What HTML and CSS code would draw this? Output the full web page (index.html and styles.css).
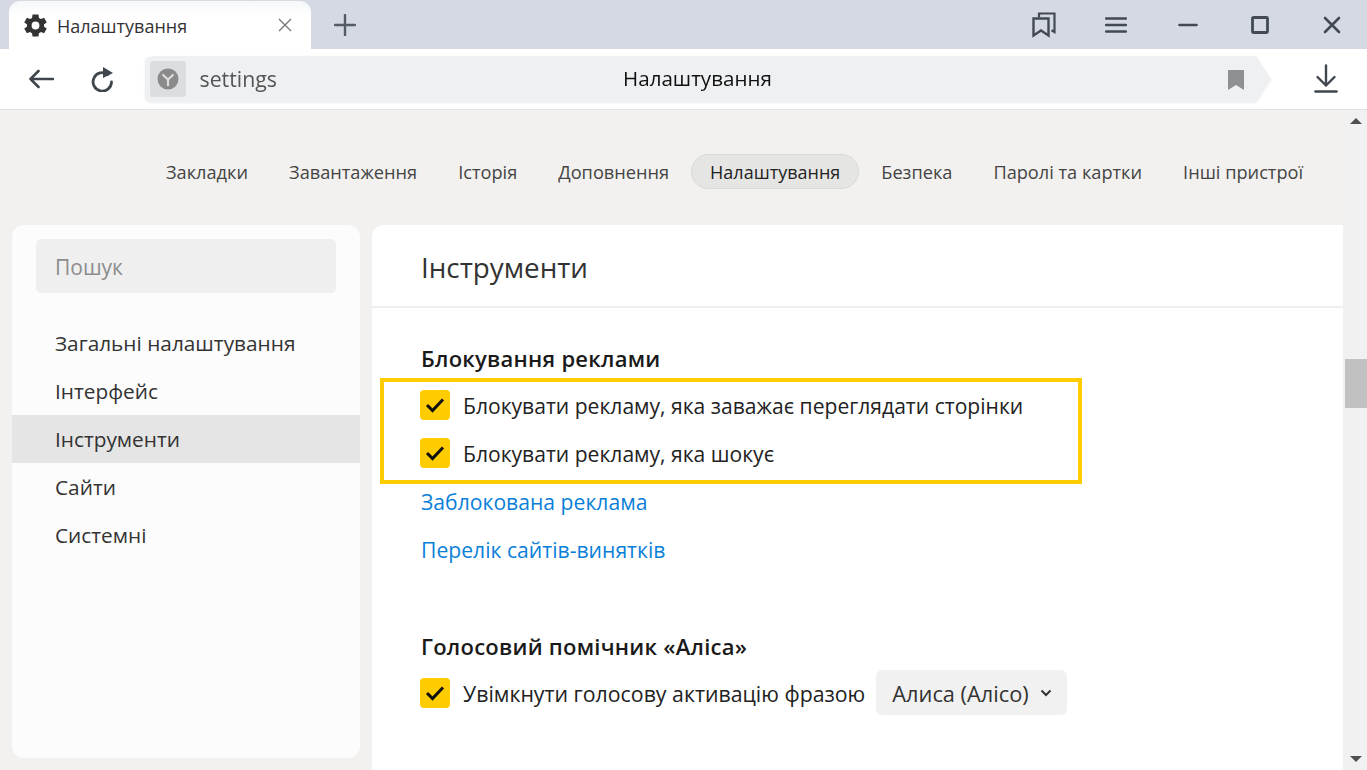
FILE: index.html
```html
<!DOCTYPE html>
<html lang="uk">
<head>
<meta charset="utf-8">
<title>Налаштування</title>
<link rel="stylesheet" href="styles.css">
</head>
<body>
<div class="app">
  <header class="tabbar">
    <div class="tab">
      <svg class="tab-gear" width="23" height="23" viewBox="2 2 20 20"><path fill="#333" d="M19.400 13a7.600 7.600 0 0 0 0-2l2.400-1.700-2.300-4-2.700 1.100a7.600 7.600 0 0 0-1.800-1L14.600 2.500H9.400L9 5.400a7.600 7.600 0 0 0-1.800 1L4.500 5.300l-2.300 4L4.600 11a7.600 7.600 0 0 0 0 2l-2.400 1.700 2.300 4 2.700-1.100a7.600 7.600 0 0 0 1.800 1l.4 2.900h5.200l.4-2.900a7.600 7.600 0 0 0 1.800-1l2.700 1.100 2.300-4zM12 15.400a3.400 3.400 0 1 1 0-6.800 3.400 3.400 0 0 1 0 6.800z"/></svg>
      <span class="tab-title">Налаштування</span>
      <svg class="tab-close" width="14" height="14" viewBox="0 0 14 14"><path d="M1 1l12 12M13 1L1 13" stroke="#777" stroke-width="1.400" fill="none"/></svg>
    </div>
    <svg class="tab-new" width="22" height="22" viewBox="0 0 22 22"><path d="M11 1v20M1 11h20" stroke="#555b62" stroke-width="2.400" fill="none" stroke-linecap="round"/></svg>
    <div class="win-controls">
      <span class="win-slot"><svg width="24" height="26" viewBox="0 0 24 26"><path d="M7 5.500V1.500h15.500v18.500l-3-1.800" stroke="#434a52" stroke-width="2.200" fill="none"/><path d="M1.500 6.500h15v17l-7.500-5-7.500 5z" stroke="#434a52" stroke-width="2.400" fill="none"/></svg></span>
      <span class="win-slot"><svg width="22" height="18" viewBox="0 0 22 18"><path d="M1 2.500h20M1 9h20M1 15.500h20" stroke="#434a52" stroke-width="2.400" stroke-linecap="round" fill="none"/></svg></span>
      <span class="win-slot"><svg width="20" height="4" viewBox="0 0 20 4"><path d="M1.500 2h17" stroke="#434a52" stroke-width="2.600" stroke-linecap="round"/></svg></span>
      <span class="win-slot"><svg width="20" height="20" viewBox="0 0 20 20"><rect x="2.500" y="2.500" width="15" height="15" rx="1" stroke="#434a52" stroke-width="2.800" fill="none"/></svg></span>
      <span class="win-slot"><svg width="18" height="18" viewBox="0 0 18 18"><path d="M2 2l14 14M16 2L2 16" stroke="#434a52" stroke-width="2.600" stroke-linecap="round" fill="none"/></svg></span>
    </div>
  </header>

  <div class="toolbar">
    <svg class="nav-back" width="26" height="20" viewBox="0 0 26 20"><path d="M25 10H2.500M10.500 2L2.500 10l8 8" stroke="#3f464d" stroke-width="2.600" fill="none" stroke-linecap="round" stroke-linejoin="round"/></svg>
    <svg class="nav-reload" width="24" height="26" viewBox="0 0 24 26"><path d="M17.800 8.500A9.200 9.200 0 1 0 21.500 16" stroke="#3f464d" stroke-width="2.800" fill="none" stroke-linecap="round"/><path d="M13 1l10 6-10 5z" fill="#3f464d"/></svg>
    <div class="omnibox-wrap">
      <div class="omnibox">
        <div class="site-badge">
          <svg width="22" height="22" viewBox="0 0 22 22"><circle cx="11" cy="11" r="10.500" fill="#8a8a8a"/><path d="M5.500 6.500L11 11.500l5.500-5M11 11.500V18" stroke="#dcdddf" stroke-width="2.200" fill="none"/></svg>
        </div>
        <span class="omni-url">settings</span>
        <span class="omni-title">Налаштування</span>
        <svg class="omni-mark" width="16" height="20" viewBox="0 0 16 20"><path d="M0 0h16v20l-8-5-8 5z" fill="#8f9092"/></svg>
      </div>
    </div>
    <svg class="download" width="24" height="30" viewBox="0 0 24 30"><path d="M12 1.500v20M3.500 13l8.500 8.500 8.500-8.500" stroke="#3f464d" stroke-width="2.400" fill="none" stroke-linecap="round" stroke-linejoin="round"/><path d="M1.500 27.500h21" stroke="#3f464d" stroke-width="2.600" stroke-linecap="round"/></svg>
  </div>

  <div class="viewport">
    <div class="page">
      <nav class="topnav">
        <a class="topnav-item">Закладки</a>
        <a class="topnav-item">Завантаження</a>
        <a class="topnav-item">Історія</a>
        <a class="topnav-item">Доповнення</a>
        <a class="topnav-item active">Налаштування</a>
        <a class="topnav-item">Безпека</a>
        <a class="topnav-item">Паролі та картки</a>
        <a class="topnav-item">Інші пристрої</a>
      </nav>
      <div class="columns">
        <aside class="sidebar">
          <div class="search">Пошук</div>
          <ul class="side-list">
            <li class="side-item">Загальні налаштування</li>
            <li class="side-item">Інтерфейс</li>
            <li class="side-item current">Інструменти</li>
            <li class="side-item">Сайти</li>
            <li class="side-item">Системні</li>
          </ul>
        </aside>
        <main class="content">
          <h1 class="content-title">Інструменти</h1>
          <section class="group first">
            <h2 class="group-title">Блокування реклами</h2>
            <div class="highlighted">
              <div class="check-row"><span class="check"><svg width="20" height="16" viewBox="0 0 20 16"><path d="M2 8l5.500 5.500L18 2.500" stroke="#111" stroke-width="3" fill="none"/></svg></span>Блокувати рекламу, яка заважає переглядати сторінки</div>
              <div class="check-row"><span class="check"><svg width="20" height="16" viewBox="0 0 20 16"><path d="M2 8l5.500 5.500L18 2.500" stroke="#111" stroke-width="3" fill="none"/></svg></span>Блокувати рекламу, яка шокує</div>
            </div>
            <a class="link">Заблокована реклама</a>
            <a class="link">Перелік сайтів-винятків</a>
          </section>
          <section class="group second">
            <h2 class="group-title">Голосовий помічник «Аліса»</h2>
            <div class="check-row alice"><span class="check"><svg width="20" height="16" viewBox="0 0 20 16"><path d="M2 8l5.500 5.500L18 2.500" stroke="#111" stroke-width="3" fill="none"/></svg></span>Увімкнути голосову активацію фразою
              <span class="select">Алиса (Алісо)<svg width="12" height="8" viewBox="0 0 12 8"><path d="M1.500 1.500L6 6l4.500-4.500" stroke="#333" stroke-width="2" fill="none"/></svg></span>
            </div>
          </section>
        </main>
      </div>
    </div>
    <div class="scrollbar">
      <span class="arrow up"></span>
      <div class="track"><div class="thumb"></div></div>
      <span class="arrow down"></span>
    </div>
  </div>
</div>
</body>
</html>
```
FILE: styles.css
```css
* { box-sizing: border-box; }
html, body { margin: 0; height: 100%; overflow: hidden; }
body { font-family: "Open Sans", "Noto Sans", sans-serif; color: #222; background: #f2f1ef; }
.app { width: 1367px; height: 770px; display: flex; flex-direction: column; }

.tabbar { height: 49px; background: #d5d9e2; display: flex; align-items: center; padding-left: 9px; flex: none; }
.tab { width: 302px; height: 48px; margin-top: 1px; align-self: flex-start; background: linear-gradient(#f6f7f9, #fff 30%); border-radius: 11px 11px 0 0; display: flex; align-items: center; padding: 0 19px 0 15px; }
.tab-gear { flex: none; }
.tab-title { font-size: 18px; color: #333; margin-left: 10px; padding-top: 1px; flex: 1; }
.tab-new { margin-left: 23px; }
.win-controls { margin-left: auto; display: flex; align-items: center; margin-right: -1px; }
.win-slot { width: 72px; display: flex; justify-content: center; align-items: center; }

.toolbar { height: 61px; background: #fff; border-bottom: 1px solid #e1e1e1; display: flex; align-items: center; flex: none; padding-left: 28px; }
.nav-back { flex: none; }
.nav-reload { flex: none; margin-left: 36px; }
.omnibox-wrap { margin-left: 31px; flex: none; filter: drop-shadow(0 1px 1px rgba(0,0,0,.08)); }
.omnibox { width: 1126px; height: 46px; background: #eff0f2; position: relative; display: flex; align-items: center; padding: 0 0 2px 5px; clip-path: polygon(8px 0, 1111px 0, 100% 50%, 1111px 100%, 8px 100%, 2px 97%, 0 90%, 0 10%, 2px 3%); }
.site-badge { width: 36px; height: 36px; margin-top: 2px; background: #dcdddf; border-radius: 3px; display: flex; align-items: center; justify-content: center; flex: none; }
.omni-url { font-size: 21.300px; color: #555; margin-left: 13.500px; }
.omni-title { position: absolute; left: 478px; font-size: 20.600px; color: #111; }
.omni-mark { position: absolute; left: 1083px; top: 14px; }
.download { margin-left: 43px; flex: none; }

.viewport { flex: 1; display: flex; min-height: 0; }
.page { width: 1345px; flex: none; padding-left: 12px; display: flex; flex-direction: column; }
.topnav { display: flex; align-items: center; height: 115px; padding: 9px 0 0 135px; }
.topnav-item { font-size: 18.200px; color: #444; padding: 0 19px; height: 36px; line-height: 36px; margin-right: 3px; border-radius: 18px; white-space: nowrap; }
.topnav-item.active { background: #e5e5e3; color: #222; border: 1px solid #d9d9d7; font-size: 18px; height: 35px; line-height: 34px; padding: 0 18px; margin-top: -1px; }

.columns { flex: 1; display: flex; gap: 12px; min-height: 0; padding-right: 2px; }
.sidebar { width: 348px; height: 533px; background: #fcfcfc; border-radius: 12px; flex: none; padding-top: 14px; }
.search { width: 300px; height: 54px; margin-left: 24px; background: #efefef; border-radius: 5px; font-size: 21px; color: #8c8c8c; line-height: 56px; padding-left: 19px; }
.side-list { list-style: none; margin: 26px 0 0; padding: 0; }
.side-item { height: 48px; line-height: 48px; font-size: 20.800px; color: #333; padding-left: 43px; }
.side-item.current { background: #e5e5e5; }

.content { flex: 1; background: #fff; border-radius: 12px 0 0 0; }
.content-title { font-size: 27.800px; font-weight: 400; color: #333; margin: 0; height: 83px; line-height: 84px; padding-left: 49px; border-bottom: 2px solid #efefef; }
.group { padding-left: 48px; }
.group.first { padding-top: 32px; }
.group.second { padding-top: 54px; }
.group-title { font-size: 22px; font-weight: 600; letter-spacing: .25px; color: #1a1a1a; margin: 0; height: 36px; line-height: 36px; padding-left: 1px; }
.highlighted { width: 702px; margin: 2px 0 0 -40px; height: 106px; border: 4px solid #fc0; padding-left: 36px; }
.check-row { height: 48px; padding-bottom: 2px; display: flex; align-items: center; font-size: 21.080px; color: #222; white-space: nowrap; }
.check { width: 30px; height: 30px; border-radius: 4px; background: #fc0; flex: none; margin-right: 13px; display: flex; align-items: center; justify-content: center; }
.link { display: block; height: 48px; line-height: 48px; padding-left: 1px; font-size: 21.150px; color: #0a7fd9; }
.highlighted + .link { margin-top: -6px; }
.alice { margin-top: 6px; font-size: 21.300px; }
.select { height: 45px; margin-left: 11px; margin-top: -1px; padding: 1px 15px 0 16px; background: #f1f1f1; border-radius: 6px; display: flex; align-items: center; gap: 11px; color: #333; font-size: 21.800px; }

.scrollbar { width: 22px; flex: none; background: #f1f1f1; display: flex; flex-direction: column; align-items: center; }
.track { flex: 1; width: 100%; padding-top: 235px; }
.thumb { width: 100%; height: 49px; background: #c1c1c1; }
.arrow { width: 0; height: 0; border-left: 6px solid transparent; border-right: 6px solid transparent; flex: none; }
.arrow.up { border-bottom: 6px solid #505050; margin-top: 8px; }
.arrow.down { border-top: 6px solid #505050; margin-bottom: 8px; }
```
